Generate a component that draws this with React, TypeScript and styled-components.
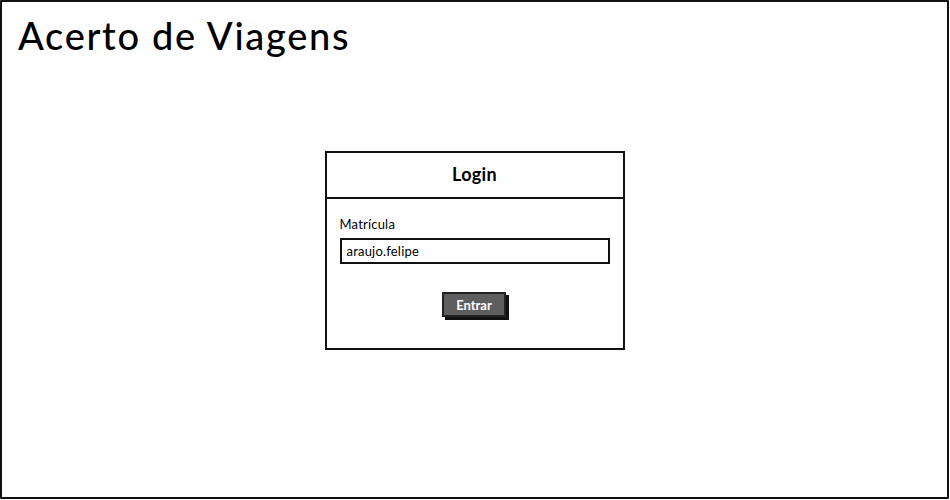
import React from "react";
import styled, { createGlobalStyle } from "styled-components";

const Global = createGlobalStyle`
  html, body { margin: 0; padding: 0; background: #fff; }
  body { font-family: Lato, "Open Sans", sans-serif; color: #000; }
`;

const Frame = styled.div`
  box-sizing: border-box;
  width: 949px;
  height: 499px;
  border: 2px solid #111;
  border-radius: 1px;
  padding: 11px 0 0 16px;
  display: flex;
  flex-direction: column;
`;

const Title = styled.h1`
  margin: 0;
  font-family: Lato, sans-serif;
  font-weight: 500;
  font-size: 38px;
  line-height: 44px;
  letter-spacing: 1.7px;
`;

const Center = styled.div`
  display: flex;
  justify-content: center;
  padding-top: 94px;
  padding-right: 16px;
`;

const Panel = styled.section`
  box-sizing: border-box;
  width: 300px;
  height: 199px;
  border: 2px solid #111;
  display: flex;
  flex-direction: column;
`;

const PanelHeader = styled.header`
  box-sizing: border-box;
  height: 46px;
  padding-bottom: 3px;
  border-bottom: 2px solid #111;
  display: flex;
  align-items: center;
  justify-content: center;
  font-weight: 700;
  font-size: 18px;
  letter-spacing: 0.3px;
`;

const PanelBody = styled.div`
  padding: 17px 14px 0 13px;
  display: flex;
  flex-direction: column;
`;

const Label = styled.label`
  font-size: 13px;
  line-height: 16px;
  letter-spacing: 0.2px;
`;

const Input = styled.div`
  box-sizing: border-box;
  margin-top: 6px;
  height: 26px;
  width: 270px;
  border: 2px solid #111;
  padding: 0 0 0 5px;
  display: flex;
  align-items: center;
  font-size: 13px;
  letter-spacing: 0.2px;
`;

const Actions = styled.div`
  display: flex;
  justify-content: center;
  margin-top: 28px;
`;

const Button = styled.button`
  box-sizing: border-box;
  width: 64px;
  height: 25px;
  background: #5e5e5e;
  color: #fff;
  border: 2px solid #222;
  box-shadow: 3px 3px 0 #111;
  font-family: Lato, sans-serif;
  font-weight: 700;
  font-size: 13px;
  padding: 0;
`;

export default function App() {
  return (
    <>
      <Global />
      <Frame>
        <Title>Acerto de Viagens</Title>
        <Center>
          <Panel>
            <PanelHeader>Login</PanelHeader>
            <PanelBody>
              <Label>Matrícula</Label>
              <Input>araujo.felipe</Input>
              <Actions>
                <Button>Entrar</Button>
              </Actions>
            </PanelBody>
          </Panel>
        </Center>
      </Frame>
    </>
  );
}
